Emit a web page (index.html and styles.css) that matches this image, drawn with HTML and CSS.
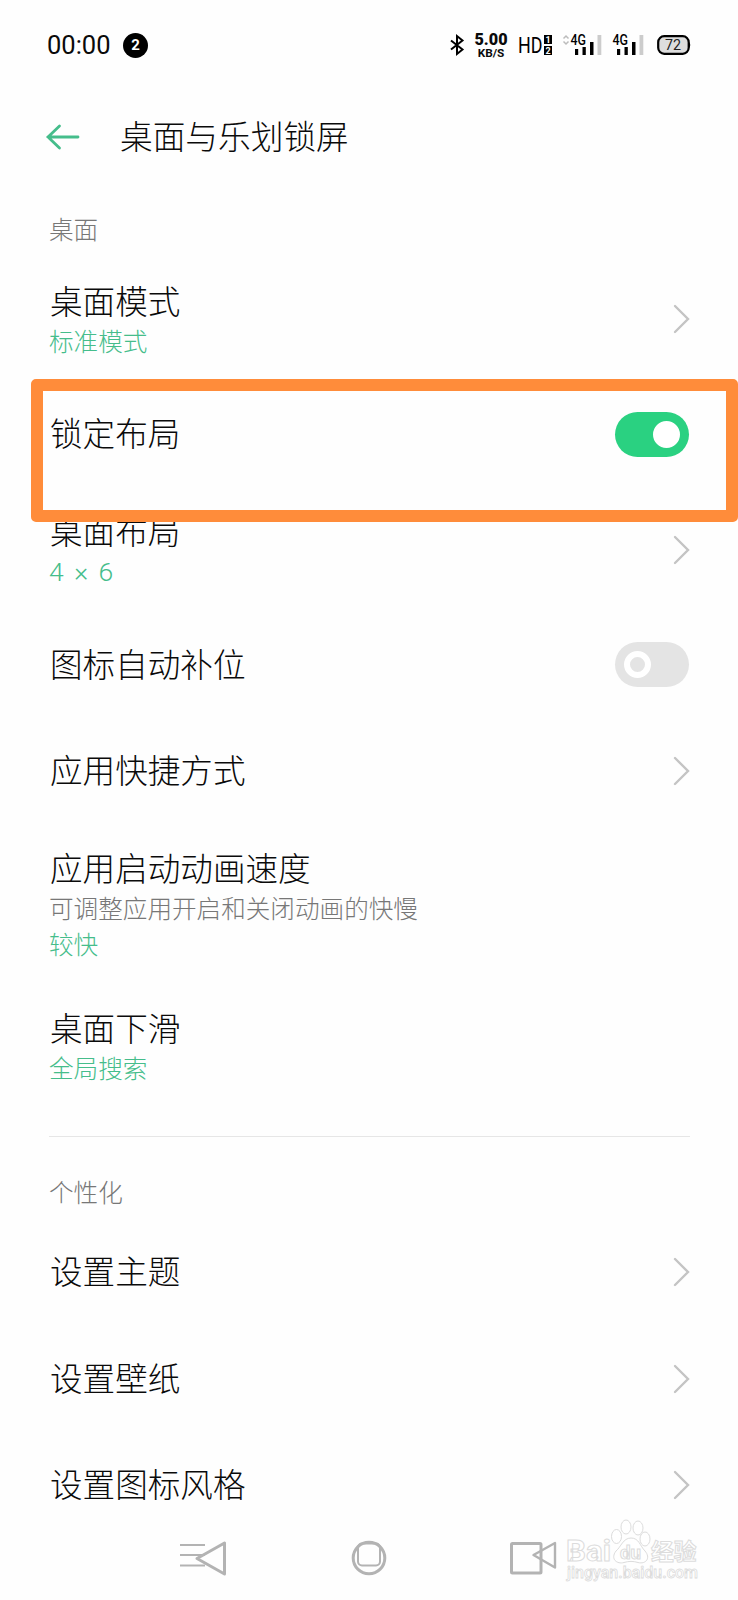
FILE: index.html
```html
<!DOCTYPE html>
<html lang="zh-CN">
<head>
  <meta charset="UTF-8" />
  <title>桌面与乐划锁屏</title>
  <link rel="stylesheet" href="styles.css">
</head>
<body>
  <div class="status-bar">
    <span class="time">00:00</span>
    <span class="badge">2</span>
    <svg class="bluetooth" width="16" height="22" viewBox="0 0 16 22"><path d="M2 6.5 L13.5 15.5 L8 20 V2 L13.5 6.5 L2 15.5" /></svg>
    <div class="speed"><b>5.00</b><span>KB/S</span></div>
    <svg class="hd" width="36" height="22" viewBox="0 0 36 22">
      <text x="0" y="19" font-size="22.5" textLength="24.5" lengthAdjust="spacingAndGlyphs">HD</text>
      <rect x="26" y="1" width="8" height="9" />
      <rect x="26" y="12" width="8" height="9" />
      <text class="sim" x="30" y="8.8">1</text>
      <text class="sim" x="30" y="19.8">2</text>
    </svg>
    <svg class="signal" width="42" height="22" viewBox="0 0 42 22">
      <path class="arrows" d="M1.5 4.5 L4 2 L6.5 4.5 M1.5 7.5 L4 10 L6.5 7.5" />
      <text x="8.5" y="11" textLength="15.5" lengthAdjust="spacingAndGlyphs">4G</text>
      <path d="M13 15h3.2v6H13z M20.5 13h3.3v8h-3.3z M28 8h3.5v13H28z" />
      <path class="off" d="M35.5 1h3.8v20h-3.8z" />
    </svg>
    <svg class="signal" width="42" height="22" viewBox="0 0 42 22">
      <text x="8.5" y="11" textLength="15.5" lengthAdjust="spacingAndGlyphs">4G</text>
      <path d="M13 15h3.2v6H13z M20.5 13h3.3v8h-3.3z M28 8h3.5v13H28z" />
      <path class="off" d="M35.5 1h3.8v20h-3.8z" />
    </svg>
    <svg class="battery" width="35" height="22" viewBox="0 0 35 22">
      <rect x="1.2" y="2.2" width="30.5" height="17.6" rx="6" />
      <path d="M32 8 Q34.5 11 32 14z" />
      <text x="8" y="16.3" textLength="16" lengthAdjust="spacingAndGlyphs">72</text>
    </svg>
  </div>

  <header class="header">
    <svg width="34" height="26" viewBox="0 0 34 26"><path d="M13.5 2 L2 13 L13.5 24 M2 13 H32" /></svg>
    <h1>桌面与乐划锁屏</h1>
  </header>

  <h2>桌面</h2>
  <div class="row double">
    <div class="label">桌面模式<span class="value">标准模式</span></div>
    <svg class="chevron" width="17" height="30" viewBox="0 0 17 30"><path d="M2 2 L15 15 L2 28" /></svg>
  </div>
  <div class="row highlight">
    <div class="label">锁定布局</div>
    <div class="switch on"><i></i></div>
  </div>
  <div class="row double">
    <div class="label">桌面布局<span class="value grid-size">4 × 6</span></div>
    <svg class="chevron" width="17" height="30" viewBox="0 0 17 30"><path d="M2 2 L15 15 L2 28" /></svg>
  </div>
  <div class="row">
    <div class="label">图标自动补位</div>
    <div class="switch"><i></i></div>
  </div>
  <div class="row">
    <div class="label">应用快捷方式</div>
    <svg class="chevron" width="17" height="30" viewBox="0 0 17 30"><path d="M2 2 L15 15 L2 28" /></svg>
  </div>
  <div class="row triple">
    <div class="label">应用启动动画速度<span class="desc">可调整应用开启和关闭动画的快慢</span><span class="value">较快</span></div>
  </div>
  <div class="row double">
    <div class="label">桌面下滑<span class="value">全局搜索</span></div>
  </div>

  <hr>

  <h2>个性化</h2>
  <div class="row">
    <div class="label">设置主题</div>
    <svg class="chevron" width="17" height="30" viewBox="0 0 17 30"><path d="M2 2 L15 15 L2 28" /></svg>
  </div>
  <div class="row">
    <div class="label">设置壁纸</div>
    <svg class="chevron" width="17" height="30" viewBox="0 0 17 30"><path d="M2 2 L15 15 L2 28" /></svg>
  </div>
  <div class="row">
    <div class="label">设置图标风格</div>
    <svg class="chevron" width="17" height="30" viewBox="0 0 17 30"><path d="M2 2 L15 15 L2 28" /></svg>
  </div>

  <nav class="nav-bar">
    <svg width="48" height="36" viewBox="0 0 48 36">
      <path class="thin" d="M0 5H25 M0 15H25 M0 25.5H25" />
      <path class="cover" d="M17 18.5 L44.5 3 V34z" />
    </svg>
    <svg width="36" height="36" viewBox="0 0 36 36">
      <circle cx="18" cy="18" r="15.8" />
      <rect class="thin" x="7" y="3.5" width="22" height="22" rx="4" />
    </svg>
    <svg width="48" height="36" viewBox="0 0 48 36">
      <rect x="1.5" y="3.5" width="29.5" height="29.5" rx="1" />
      <path class="lens" d="M23.5 15 L45 3 V27.5z" />
    </svg>
  </nav>

  <svg class="watermark" width="140" height="68" viewBox="0 0 140 68">
    <text x="6" y="43" font-size="30" textLength="45" lengthAdjust="spacingAndGlyphs">Bai</text>
    <g>
      <ellipse cx="56.5" cy="18.5" rx="5" ry="7" />
      <ellipse cx="66" cy="9" rx="5" ry="7" />
      <ellipse cx="78" cy="10" rx="5" ry="7" />
      <ellipse cx="85" cy="21" rx="5" ry="7" />
      <path d="M71 20 C63 20 61 29 56 33 C50 41 57 46.5 64 44.5 C69 43 73 43 78 44.5 C86 46.5 91 40 85 33 C80 28 79 20 71 20z" />
    </g>
    <text x="60" y="41" font-size="18" textLength="21" lengthAdjust="spacingAndGlyphs">du</text>
    <text class="cjk" x="91" y="42" font-size="22.8">经验</text>
    <text class="url" x="7" y="60" font-size="16.5" textLength="131" lengthAdjust="spacingAndGlyphs">jingyan.baidu.com</text>
  </svg>
</body>
</html>
```

FILE: styles.css
```css
*, *::after {
  box-sizing: border-box;
}

body {
  position: relative;
  height: 1600px;
  margin: 0;
  overflow: hidden;
  background-color: #fefefe;
  color: #0a0a0a;
  font-family: "Noto Sans CJK SC", sans-serif;
  font-weight: 300;
}

svg {
  display: block;
  flex: none;
  overflow: visible;
  fill: none;
}

svg text {
  font-family: Roboto, sans-serif;
}

/* status bar */
.status-bar {
  display: flex;
  align-items: center;
  height: 90px;
  padding-left: 47px;
  font-family: Roboto, sans-serif;
}

.time {
  width: 76px;
  font-size: 25.5px;
  font-weight: 400;
}

.badge {
  width: 25px;
  height: 25px;
  margin-right: 301px;
  border-radius: 50%;
  background-color: #000;
  color: #fff;
  font-size: 15px;
  font-weight: 700;
  line-height: 25px;
  text-align: center;
}

.bluetooth {
  stroke: #000;
  stroke-width: 2;
}

.speed {
  display: flex;
  flex-direction: column;
  width: 34px;
  margin: 0 10px 0 9px;
  padding-top: 1px;
  text-align: center;
  font-weight: 700;
}

.speed b {
  font-size: 16.2px;
  line-height: 14px;
}

.speed span {
  font-size: 11.8px;
  line-height: 12px;
}

.hd {
  margin-right: 8px;
  fill: #000;
  font-weight: 400;
}

.hd .sim {
  fill: #fff;
  font-size: 9px;
  font-weight: 700;
  text-anchor: middle;
}

.signal {
  fill: #000;
}

.signal text {
  font-size: 14px;
  font-weight: 500;
}

.signal .arrows {
  fill: none;
  stroke: #bbb;
  stroke-width: 1.5;
}

.signal .off {
  fill: #ccc;
}

.battery {
  margin-left: 11px;
}

.battery rect {
  fill: #ddd;
  stroke: #000;
  stroke-width: 2.2;
}

.battery path {
  fill: #000;
}

.battery text {
  fill: #222;
  font-size: 15px;
  font-weight: 400;
}

/* page title */
.header {
  display: flex;
  align-items: center;
  height: 94px;
  padding-left: 46px;
}

.header svg {
  stroke: #45bd8b;
  stroke-width: 2.8;
  stroke-linecap: round;
}

.header h1 {
  margin: 0 0 0 40px;
  padding-bottom: 6px;
  font-size: 32.7px;
  font-weight: 300;
}

h2 {
  height: 36px;
  margin: 26px 0 11px;
  padding-left: 49px;
  color: #777;
  font-size: 24.6px;
  font-weight: 300;
  line-height: 36px;
}

/* settings list */
.row {
  display: flex;
  align-items: center;
  justify-content: space-between;
  position: relative;
  height: 106.5px;
  padding: 0 48px 0 49px;
}

.double {
  height: 124px;
}

.triple {
  height: 159.5px;
}

.label {
  padding: 0 0 4px 1px;
  font-size: 32.6px;
  line-height: 44px;
}

.double .label,
.triple .label {
  padding-bottom: 3px;
}

.label span {
  display: block;
  margin-left: -1px;
  font-size: 24.6px;
  line-height: 36px;
}

.value {
  color: #45bd8b;
}

.label .grid-size {
  padding-top: 3px;
  font-family: Roboto, "Noto Sans CJK SC", sans-serif;
  font-size: 26.5px;
  line-height: 33px;
  word-spacing: 4px;
}

.desc {
  color: #777;
}

.chevron {
  stroke: #c4c4c4;
  stroke-width: 2.4;
  stroke-linecap: round;
}

/* frame drawn over the row and its neighbours */
.highlight::after {
  content: "";
  position: absolute;
  z-index: 1;
  top: -2px;
  left: 31px;
  right: 0;
  height: 143px;
  border: 12px solid #ff8c3a;
  border-radius: 5px;
}

.switch {
  display: flex;
  width: 74px;
  height: 45px;
  margin-right: 1px;
  padding: 9px;
  border-radius: 23px;
  background-color: #e4e4e4;
}

.switch i {
  width: 27px;
  height: 27px;
  border: 6px solid #fff;
  border-radius: 50%;
}

.switch.on {
  justify-content: flex-end;
  background-color: #2ad181;
}

.switch.on i {
  background-color: #fff;
}

hr {
  height: 1px;
  margin: 28px 48px 0 49px;
  border: 0;
  background-color: #e6e6e6;
}

hr + h2 {
  margin: 36px 0 10px;
}

/* bottom bar */
.nav-bar {
  display: flex;
  justify-content: space-between;
  margin-top: 1px;
  padding: 0 180px;
  stroke: #b3b3b3;
  stroke-width: 3;
  stroke-linejoin: round;
}

.nav-bar .thin {
  stroke-width: 2;
}

.nav-bar .lens {
  stroke-width: 2.4;
}

.watermark {
  position: absolute;
  left: 560px;
  top: 1518px;
  fill: #fff;
  stroke: #dcdcdc;
  stroke-width: 1;
}

.watermark text {
  font-weight: 700;
}

.watermark .cjk {
  font-family: "Noto Sans CJK SC", sans-serif;
}

.watermark .url {
  font-weight: 500;
  stroke-width: 0.8;
}
```
